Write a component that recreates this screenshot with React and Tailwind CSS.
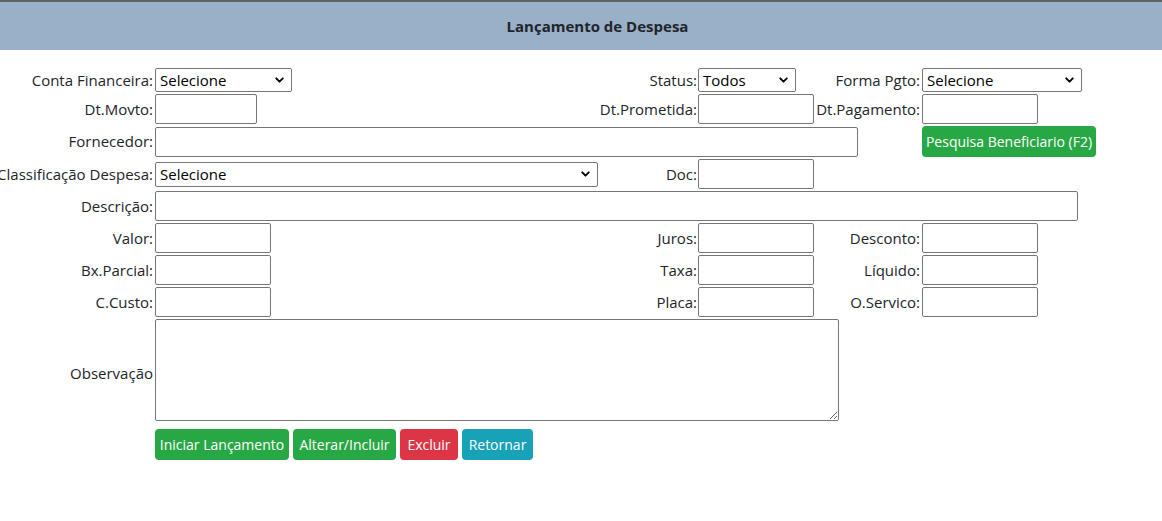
import { ChevronDown } from "lucide-react";

const font = { fontFamily: '"Open Sans", "Noto Sans", sans-serif' };

function Label({ children, className = "" }) {
  return (
    <div className={`flex items-center justify-end whitespace-nowrap text-[15px] text-[#212529] ${className}`}>
      {children}
    </div>
  );
}

function Field({ className = "" }) {
  return <input className={`h-[30px] rounded-[2px] border border-[#767676] bg-white px-1 text-[15px] outline-none ${className}`} />;
}

function Select({ value, className = "" }) {
  return (
    <div className={`relative flex h-[24px] items-center rounded-[2px] border border-[#767676] bg-white pl-[4px] text-[15px] text-black ${className}`}>
      <span>{value}</span>
      <ChevronDown className="absolute right-[5px] top-1/2 -translate-y-1/2 text-black" size={13} strokeWidth={3.5} />
    </div>
  );
}

function Btn({ children, color, className = "" }) {
  return (
    <button className={`flex h-[31px] items-center justify-center whitespace-nowrap rounded-[4px] text-[14px] text-white ${color} ${className}`}>
      {children}
    </button>
  );
}

export default function App() {
  return (
    <div className="min-h-[521px] overflow-hidden bg-white" style={font}>
      <div className="flex h-[50px] items-center justify-center border-t-2 border-[#5f6368] bg-[#9aafc8] pl-[33px]">
        <h1 className="text-[15px] font-bold text-[#212529]">Lançamento de Despesa</h1>
      </div>

      <div className="mt-[18px] grid grid-cols-[155px_445px_98px_118px_106px_1fr] grid-rows-[24px_30px_31px_30px_30px_30px_30px_30px_102px] gap-y-[2px]">
        {/* row 1 */}
        <Label className="pr-[2px]">Conta Financeira:</Label>
        <div><Select value="Selecione" className="w-[137px]" /></div>
        <Label className="pr-[1px]">Status:</Label>
        <div><Select value="Todos" className="w-[98px]" /></div>
        <Label className="pr-[2px]">Forma Pgto:</Label>
        <div><Select value="Selecione" className="w-[160px]" /></div>

        {/* row 2 */}
        <Label className="pr-[2px]">Dt.Movto:</Label>
        <div><Field className="w-[102px]" /></div>
        <Label className="pr-[1px]">Dt.Prometida:</Label>
        <div><Field className="w-[116px]" /></div>
        <Label className="pr-[2px]">Dt.Pagamento:</Label>
        <div><Field className="w-[116px]" /></div>

        {/* row 3 */}
        <Label className="pr-[2px]">Fornecedor:</Label>
        <div className="col-span-4 flex items-end"><Field className="w-[703px]" /></div>
        <div>
          <Btn color="bg-[#28a745]" className="h-[30px] w-[174px] text-[13.5px]">Pesquisa Beneficiario (F2)</Btn>
        </div>

        {/* row 4 */}
        <Label className="pr-[2px]">Classificação Despesa:</Label>
        <div className="flex items-center"><Select value="Selecione" className="h-[25px] w-[443px]" /></div>
        <Label className="pr-[1px]">Doc:</Label>
        <div><Field className="w-[116px]" /></div>
        <div className="col-span-2" />

        {/* row 5 */}
        <Label className="pr-[2px]">Descrição:</Label>
        <div className="col-span-5"><Field className="w-[923px]" /></div>

        {/* row 6 */}
        <Label className="pr-[2px]">Valor:</Label>
        <div><Field className="w-[116px]" /></div>
        <Label className="pr-[1px]">Juros:</Label>
        <div><Field className="w-[116px]" /></div>
        <Label className="pr-[2px]">Desconto:</Label>
        <div><Field className="w-[116px]" /></div>

        {/* row 7 */}
        <Label className="pr-[2px]">Bx.Parcial:</Label>
        <div><Field className="w-[116px]" /></div>
        <Label className="pr-[1px]">Taxa:</Label>
        <div><Field className="w-[116px]" /></div>
        <Label className="pr-[2px]">Líquido:</Label>
        <div><Field className="w-[116px]" /></div>

        {/* row 8 */}
        <Label className="pr-[2px]">C.Custo:</Label>
        <div><Field className="w-[116px]" /></div>
        <Label className="pr-[1px]">Placa:</Label>
        <div><Field className="w-[116px]" /></div>
        <Label className="pr-[2px]">O.Servico:</Label>
        <div><Field className="w-[116px]" /></div>

        {/* row 9 */}
        <Label className="pr-[2px] pt-[6px]">Observação</Label>
        <div className="col-span-5">
          <textarea className="block h-[102px] w-[684px] rounded-[2px] border border-[#767676] bg-white outline-none" />
        </div>
      </div>

      <div className="ml-[155px] mt-[8px] flex gap-[4px]">
        <Btn color="bg-[#28a745]" className="w-[134px]">Iniciar Lançamento</Btn>
        <Btn color="bg-[#28a745]" className="w-[103px]">Alterar/Incluir</Btn>
        <Btn color="bg-[#dc3545]" className="w-[58px]">Excluir</Btn>
        <Btn color="bg-[#17a2b8]" className="w-[71px]">Retornar</Btn>
      </div>
    </div>
  );
}
